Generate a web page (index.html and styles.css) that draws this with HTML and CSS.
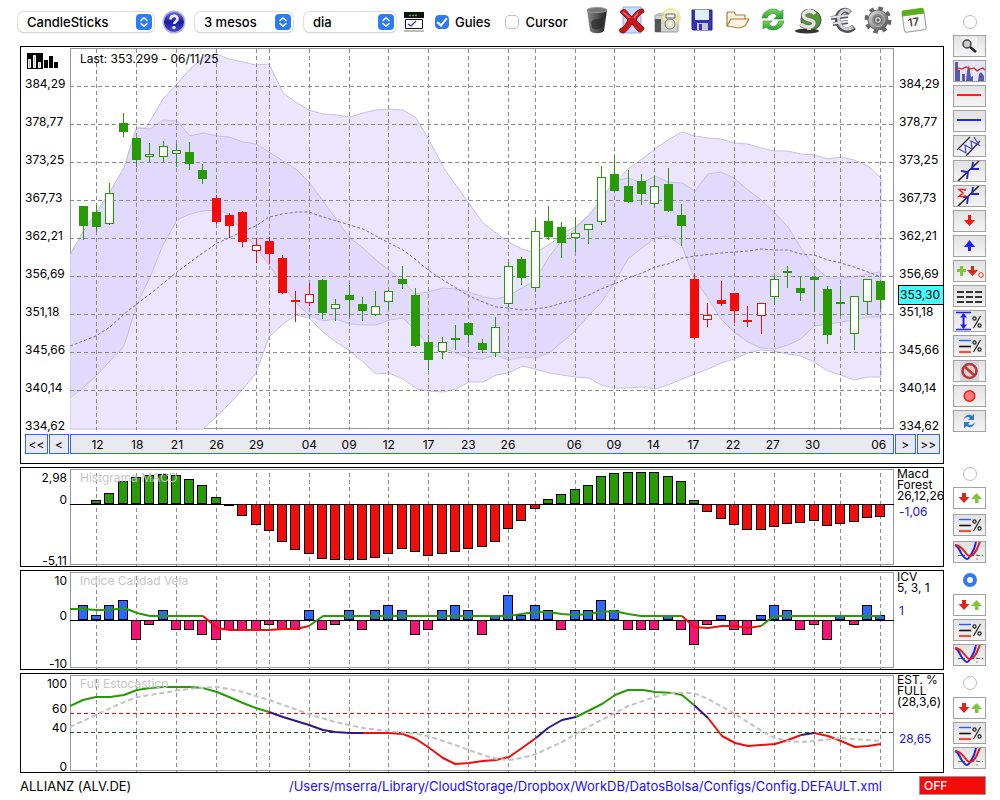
FILE: index.html
```html
<!DOCTYPE html>
<html lang="ca">
<head>
<meta charset="utf-8">
<meta name="viewport" content="width=device-width, initial-scale=1">
<title>ALLIANZ (ALV.DE)</title>
<link rel="stylesheet" href="styles.css">
</head>
<body>
<svg class="defs" aria-hidden="true">
<defs>
<linearGradient id="gHelp" x1="0" y1="0" x2="0" y2="1"><stop offset="0" stop-color="#6a6ae0"/><stop offset=".5" stop-color="#1a1a9c"/><stop offset="1" stop-color="#4a4ad0"/></linearGradient>
<linearGradient id="gTrash"><stop offset="0" stop-color="#8a8a8a"/><stop offset=".5" stop-color="#555"/><stop offset="1" stop-color="#222"/></linearGradient>
<linearGradient id="gSteel" x1="0" y1="0" x2="1" y2="1"><stop offset="0" stop-color="#eee"/><stop offset=".5" stop-color="#999"/><stop offset="1" stop-color="#444"/></linearGradient>
<linearGradient id="gGreen" x1="0" y1="0" x2="0" y2="1"><stop offset="0" stop-color="#7ed957"/><stop offset="1" stop-color="#1f9a30"/></linearGradient>
<symbol id="stepper" viewBox="0 0 16 16"><rect width="16" height="16" rx="4" fill="#2f7bf6"/><path d="M5 6.5 8 3.7 11 6.5M5 9.5 8 12.3 11 9.5" fill="none" stroke="#fff" stroke-width="1.5" stroke-linecap="round" stroke-linejoin="round"/></symbol>
<symbol id="percent" viewBox="0 0 10 16"><path d="M8.500 2 1.500 14" stroke="#222" stroke-width="1.200"/><circle cx="2.500" cy="4.500" r="1.600" fill="none" stroke="#222" stroke-width="1.200"/><circle cx="7.500" cy="11.500" r="1.600" fill="none" stroke="#222" stroke-width="1.200"/></symbol>
<symbol id="levels" viewBox="0 0 31 20"><path d="M5 4.500h12" stroke="#2a5cf5" stroke-width="1.400"/><path d="M5 10.500h12" stroke="#111" stroke-width="1.600"/><path d="M5 16h12" stroke="#f5503c" stroke-width="2.200"/><use href="#percent" x="18" y="2" width="10" height="16"/></symbol>
<symbol id="arrows" viewBox="0 0 31 20"><path d="M8 5h4v4h3.500L10 15 4.500 9H8z" fill="#e3221c"/><path d="M21 15h3.500v-4H28l-5.500-6L17 11h4z" fill="#7cc63e"/></symbol>
<symbol id="cross" viewBox="0 0 31 20"><path d="M4 13.500h25" stroke="#3c8a3c" stroke-dasharray="4 2 1 2"/><path d="M23 12v8" stroke="#889" stroke-dasharray="2 2"/><path d="M1 3c3 1 4 4 6 8 2 3 4 6 6 6s4-4 6-8c2-3 2-6 3-9" fill="none" stroke="#2222ee" stroke-width="2"/><path d="M1 3c4 0 7 3 10 7 2 3 3 4 5 4 3 0 5-3 7-7 1-3 2-5 3-7" fill="none" stroke="#e3221c" stroke-width="2"/></symbol>
</defs>
</svg>

<div class="page">
<header class="toolbar">
<div class="drop drop-type"><select aria-label="Tipus"><option>CandleSticks</option><option>Barres</option></select><svg><use href="#stepper"/></svg></div>
<button class="tool help" aria-label="Ajuda"><svg viewBox="0 0 24 24"><circle cx="12" cy="12" r="11.500" fill="#b4b4d8"/><circle cx="12" cy="12" r="10" fill="url(#gHelp)"/><path d="M8.500 9.500c0-5 7.500-4.500 7-.5-.3 2.400-3.200 2.500-3.400 5" fill="none" stroke="#eef" stroke-width="2.600"/><circle cx="12" cy="17.500" r="1.700" fill="#eef"/></svg></button>
<div class="drop drop-range"><select aria-label="Rang"><option>3 mesos</option><option>6 mesos</option></select><svg><use href="#stepper"/></svg></div>
<div class="drop drop-unit"><select aria-label="Periode"><option>dia</option><option>setmana</option></select><svg><use href="#stepper"/></svg></div>
<button class="tool plot-btn" aria-label="Plot"><svg viewBox="0 0 20 20"><path d="M0 0h20v6H0z" fill="#111"/><path d="M5 3.500h9" stroke="#2ec92e" stroke-width="1.500" stroke-dasharray="2 1"/><path d="M1.500 7.500h17v9h-17z" fill="#fff" stroke="#111"/><path d="M4 12l3 2 5-5" fill="none" stroke="#22e" stroke-width="1.200"/><path d="M0 19h20" stroke="#bbb" stroke-width="2"/></svg></button>
<label class="check"><input type="checkbox" checked><span>Guies</span></label>
<label class="check"><input type="checkbox"><span>Cursor</span></label>
<div class="icons">
<button class="tool" aria-label="Esborrar"><svg viewBox="0 0 28 28"><path d="M4 4l3 21c3 3 11 3 14 0l3-21z" fill="url(#gTrash)"/><ellipse cx="14" cy="4" rx="10" ry="2.500" fill="#777" stroke="#999"/><path d="M8 16c3-5 8-1 12-5l-1 10c-3 3-8 3-10 1z" fill="#222" opacity=".6"/></svg></button>
<button class="tool" aria-label="Treure"><svg viewBox="0 0 28 28"><path d="M5 1h18v26H5z" fill="#c6dcfc" stroke="#8ab0ee"/><path d="M2 6c3-4 6-3 8 1l4 4c2-4 6-8 11-8l1 3c-4 2-6 5-8 8l8 8c0 3-4 5-6 3l-6-7c-3 4-5 8-9 9-3 0-4-2-3-4 3-1 6-5 8-9z" fill="#c81818" stroke="#8a0c0c"/><path d="M5 6l7 6M20 7l-4 5" stroke="#f27070" stroke-width="1.500"/></svg></button>
<button class="tool" aria-label="Captura"><svg viewBox="0 0 28 28"><rect x="2" y="9" width="23" height="17" rx="1" fill="#d2d2ce" stroke="#999"/><path d="M2 13h6v13H2z" fill="#555"/><path d="M3 9l2-2h6v2z" fill="#bbb"/><circle cx="18" cy="12" r="9" fill="#f5f3b8" opacity=".65" stroke="#e3df80" stroke-width="2"/><circle cx="17" cy="18" r="5" fill="#ddd" stroke="#777"/><circle cx="17" cy="18" r="2" fill="#f5f3b8"/><path d="M13 8h9v4h-9z" fill="#f2f2f2" stroke="#666"/></svg></button>
<button class="tool" aria-label="Desar"><svg viewBox="0 0 28 28"><path d="M4 4h20v20H5l-1-1z" fill="#3636b4" stroke="#22228c"/><path d="M7 4h14v10H7z" fill="#dff0fb"/><path d="M9 17h11v7H9z" fill="#c9c9d4"/><path d="M11 18h3v6h-3z" fill="#3636b4"/></svg></button>
<button class="tool" aria-label="Obrir"><svg viewBox="0 0 28 28"><path d="M3 20V7l1-1h6l2 3h9v4M3 20l4-7h18l-4 7-6 2z" fill="#fff3df" stroke="#b37a35" stroke-width="1.200" stroke-linejoin="round"/></svg></button>
<button class="tool" aria-label="Refrescar"><svg viewBox="0 0 28 28"><path d="M3 12C5 2 17 1 21 6l3-2v9h-9l3-3c-3-4-8-3-10 2z" fill="url(#gGreen)" stroke="#2a8c30" stroke-width=".6"/><path d="M25 15c-2 10-14 11-18 6l-3 2v-8h9l-3 3c3 4 8 3 10-3z" fill="url(#gGreen)" stroke="#2a8c30" stroke-width=".6"/></svg></button>
<button class="tool" aria-label="Dolar"><svg viewBox="0 0 28 28"><ellipse cx="13" cy="25" rx="12" ry="2.500" fill="#333"/><circle cx="17" cy="14" r="10" fill="#4f9a34" stroke="#444"/><path d="M21 8c-4-5-14-2-11 3 2 4 10 2 10 6 0 5-9 5-13 1" fill="none" stroke="#666" stroke-width="5"/><path d="M21 8c-4-5-14-2-11 3 2 4 10 2 10 6 0 5-9 5-13 1M15 3v3M15 21v3" fill="none" stroke="#e3e6dc" stroke-width="3.500"/></svg></button>
<button class="tool" aria-label="Euro"><svg viewBox="0 0 28 28"><g fill="none" stroke="#55505a"><path d="M21 7C15 1 7 7 9 16c2 8 10 11 16 5" stroke-width="5.500"/><path d="M2 12l17-2M4 18l15-2" stroke-width="4"/></g><path d="M21 6C15 1 8 7 10 16c2 7 9 9 14 5" fill="none" stroke="#cfccd4" stroke-width="3"/><path d="M2 11.500l17-2M4 17.500l15-2" stroke="#e3e0e8" stroke-width="2"/></svg></button>
<button class="tool" aria-label="Configurar"><svg viewBox="0 0 28 28"><circle cx="14" cy="14" r="11.500" fill="none" stroke="#666" stroke-width="4" stroke-dasharray="4.500 4.530"/><circle cx="14" cy="14" r="10" fill="url(#gSteel)" stroke="#666"/><circle cx="14" cy="14" r="6.500" fill="#8a8a8a" stroke="#bbb"/><circle cx="14" cy="14" r="3.500" fill="#ddd" stroke="#555"/><circle cx="14" cy="14" r="1.500" fill="#555"/></svg></button>
<button class="tool day" aria-label="Calendari"><svg viewBox="0 0 28 28"><g transform="rotate(-8 14 14)"><rect x="3" y="4" width="22" height="21" rx="2" fill="#fafafa" stroke="#999"/><path d="M3 9V5l1-2h20l1 2v4z" fill="#5cae1c"/></g></svg><span>17</span></button>
</div>
</header>

<aside class="side side-main">
<input type="radio" name="panel" aria-label="Grafic">
<button aria-label="Zoom"><svg viewBox="0 0 31 20"><path d="M8 1h15v18H8z" fill="#f2f2f2"/><circle cx="13" cy="8" r="4" fill="#ccc" stroke="#444" stroke-width="1.500"/><path d="M16 11l6 5" stroke="#222" stroke-width="2.500"/></svg></button>
<button aria-label="Volum"><svg viewBox="0 0 31 20"><path d="M0 0h31v20H0z" fill="#e4e4f6"/><path d="M1 20V1h3v8h2v11zM8 20v-7h3v7zM12 20l1-10 2-6 2 12 2-1v5zM24 20l1-7 2-2 3 4v5z" fill="#5858ac"/><path d="M19.500 0v20" stroke="#fff"/><path d="M1 8l4-1 3 1 4-2 4 2 4-1 3 3 3-2 3-1 2 2" fill="none" stroke="#d81c1c" stroke-width="1.200"/></svg></button>
<button aria-label="Linia vermella"><svg viewBox="0 0 31 20"><path d="M3 9h24" stroke="#e22" stroke-width="2"/></svg></button>
<button aria-label="Linia blava"><svg viewBox="0 0 31 20"><path d="M3 9h24" stroke="#22f" stroke-width="2"/></svg></button>
<button aria-label="Canal"><svg viewBox="0 0 31 20"><path d="M3 14L16 1M12 20L26 5" stroke="#222" stroke-width="1.200"/><path d="M5 13l7 4-1-8 7 4-1-8 8 4-5-8" fill="none" stroke="#44d" stroke-width="1.200"/></svg></button>
<button aria-label="Tendencia"><svg viewBox="0 0 31 20"><path d="M4 20L25 0" stroke="#222" stroke-width="1.600"/><path d="M7 10l7 1-1 7M25 8l-7 0 1-7" fill="none" stroke="#22d" stroke-width="1.800"/></svg></button>
<button aria-label="Tendencia suma"><svg viewBox="0 0 31 20"><path d="M4 20L25 0" stroke="#222" stroke-width="1.600"/><path d="M9 11h5l-1 7M25 8l-7 0 1-7" fill="none" stroke="#22d" stroke-width="1.800"/><path d="M11 5V3.500H5l4 3.500-4 3.500h6V9" fill="none" stroke="#e22" stroke-width="1.500"/></svg></button>
<button aria-label="Venda"><svg viewBox="0 0 31 20"><path d="M14 4h3v5h4l-5.500 6L10 9h4z" fill="#f51414"/></svg></button>
<button aria-label="Compra"><svg viewBox="0 0 31 20"><path d="M14 15h3v-4h4l-5.500-7L10 11h4z" fill="#2222f5"/></svg></button>
<button aria-label="Senyals"><svg viewBox="0 0 31 20"><path d="M6 5h3v3h3v3H9v4H6v-4H3V8h3z" fill="#7cc63e"/><path d="M17 5h3v4h4l-5.500 6L13 9h4z" fill="#e3221c"/><circle cx="27" cy="14" r="2.300" fill="#fff" stroke="#e22"/></svg></button>
<button aria-label="Nivells"><svg viewBox="0 0 31 20"><path d="M3 6h25M3 11h25M3 16h25" stroke="#333" stroke-width="2" stroke-dasharray="7 2"/></svg></button>
<button aria-label="Distancia"><svg viewBox="0 0 31 20"><path d="M2 1.500h15M2 18.500h15" stroke="#22e" stroke-width="1.300"/><path d="M9.500 3v14" stroke="#22e" stroke-width="2"/><path d="M6 6.500L9.500 2 13 6.500zM6 13.500L9.500 18l3.500-4.500z" fill="#22e"/><use href="#percent" x="18" y="3" width="10" height="16"/></svg></button>
<button aria-label="Percentatges"><svg viewBox="0 0 31 20"><use href="#levels"/></svg></button>
<button aria-label="Prohibir"><svg viewBox="0 0 31 20"><path d="M6 0h19v20H6z" fill="#d5d5e0"/><circle cx="15.500" cy="10" r="7" fill="#e8caca" stroke="#b43c3c" stroke-width="2.600"/><path d="M10.500 5.500l10 9" stroke="#b43c3c" stroke-width="2.600"/></svg></button>
<button aria-label="Gravar"><svg viewBox="0 0 31 20"><circle cx="15.500" cy="10" r="5.300" fill="#ff7b7b" stroke="#e02020" stroke-width="1.500"/></svg></button>
<button aria-label="Actualitzar"><svg viewBox="0 0 31 20"><path d="M10 8c1-5 7-5 8-3l2-2v6h-6l2-2c-2-2-4-1-6 1zM21 11c-1 6-7 6-8 4l-3 2v-6h6l-2 2c2 2 5 1 7-2z" fill="#2f78d0"/></svg></button>
</aside>

<section class="panel panel-price">
<div class="scale scale-left">
<svg class="logo" viewBox="0 0 32 16"><path d="M0 0h16v16H0z"/><path d="M1.500 6.500h2v8h-2zM6.500 2.500h2v12h-2zM11.500 9.500h2v5h-2z" fill="#bbb" stroke="#fff"/><path d="M17 7h4v8h-4zM22 3h4v12h-4zM27 9h4v6h-4z"/></svg>
<div class="prices"></div>
</div>
<div class="plot"><span class="caption">Last: 353.299 - 06/11/25</span><svg id="price" viewBox="70 47 824 387" preserveAspectRatio="none"></svg></div>
<div class="scale scale-right"><div class="prices"></div><output class="last">353,30</output></div>
<nav class="nav nav-left"><button>&lt;&lt;</button><button>&lt;</button></nav>
<div class="dates" id="dates"></div>
<nav class="nav"><button>&gt;</button><button>&gt;&gt;</button></nav>
</section>

<section class="panel panel-macd">
<div class="scale ticks"><span>2,98</span><span>0</span><span>-5,11</span></div>
<div class="plot"><span class="caption dim">Histgrama MACD</span><svg id="macd" viewBox="70 468 824 98" preserveAspectRatio="none"></svg></div>
<div class="info">Macd<br>Forest<br>26,12,26<output>-1,06</output></div>
</section>
<aside class="side side-macd">
<input type="radio" name="panel" aria-label="MACD">
<button class="plain" aria-label="Senyals MACD"><svg><use href="#arrows"/></svg></button>
<button aria-label="Percentatges MACD"><svg><use href="#levels"/></svg></button>
<button aria-label="Creuaments MACD"><svg><use href="#cross"/></svg></button>
</aside>

<section class="panel panel-icv">
<div class="scale ticks"><span>10</span><span>0</span><span>-10</span></div>
<div class="plot"><span class="caption dim">Indice Calidad Vela</span><svg id="icv" viewBox="70 571 824 98" preserveAspectRatio="none"></svg></div>
<div class="info">ICV<br>5, 3, 1<output>1</output></div>
</section>
<aside class="side">
<input type="radio" name="panel" aria-label="ICV" checked>
<button class="plain" aria-label="Senyals ICV"><svg><use href="#arrows"/></svg></button>
<button aria-label="Percentatges ICV"><svg><use href="#levels"/></svg></button>
<button aria-label="Creuaments ICV"><svg><use href="#cross"/></svg></button>
</aside>

<section class="panel panel-est">
<div class="scale ticks"><span>100</span><span>60</span><span>40</span><span>0</span></div>
<div class="plot"><span class="caption dim">Full Estocastico</span><svg id="est" viewBox="70 674 824 98" preserveAspectRatio="none"></svg></div>
<div class="info">EST. %<br>FULL<br>(28,3,6)<output>28,65</output></div>
</section>
<aside class="side">
<input type="radio" name="panel" aria-label="Estocastic">
<button class="plain" aria-label="Senyals EST"><svg><use href="#arrows"/></svg></button>
<button aria-label="Percentatges EST"><svg><use href="#levels"/></svg></button>
<button aria-label="Creuaments EST"><svg><use href="#cross"/></svg></button>
</aside>

<footer class="status">
<span>ALLIANZ (ALV.DE)</span>
<a href="#">/Users/mserra/Library/CloudStorage/Dropbox/WorkDB/DatosBolsa/Configs/Config.DEFAULT.xml</a>
<button>OFF</button>
</footer>
</div>
<script src="charts.js"></script>
</body>
</html>
```
FILE: styles.css
```css
* {
box-sizing: border-box;
}
body {
margin: 0;
background: #fff;
color: #000;
font-family: Inter, "Liberation Sans", sans-serif;
font-size: 12px;
font-feature-settings: "calt" 0;
}
button, select, input {
font: inherit;
color: inherit;
margin: 0;
}
button {
padding: 0;
cursor: pointer;
}
svg {
display: block;
}
.defs {
position: absolute;
width: 0;
height: 0;
}
.page {
display: grid;
grid-template-columns: minmax(0, 1fr) 33px;
grid-template-rows: 43px;
column-gap: 9px;
row-gap: 3px;
padding: 0 14px 0 20px;
}

/* toolbar */
.toolbar {
display: flex;
align-items: center;
height: 43px;
margin-left: -2px;
font-size: 13px;
font-weight: 500;
}
.drop {
position: relative;
}
.drop select {
appearance: none;
display: block;
width: 100%;
height: 20px;
padding: 0 22px 0 9px;
border: 0;
border-radius: 6px;
background: #fff;
box-shadow: 0 0 1px 1px #ddd, 0 1px 1px #aaa;
line-height: 18px;
}
.drop svg {
position: absolute;
top: 2px;
right: 2px;
width: 16px;
height: 16px;
pointer-events: none;
}
.drop-type {
width: 136px;
}
.drop-range {
width: 98px;
}
.drop-unit {
width: 92px;
margin-left: 11px;
}
.tool {
border: 0;
background: none;
width: 28px;
height: 28px;
}
.tool svg {
width: 100%;
height: 100%;
}
.help {
width: 24px;
height: 24px;
margin: 0 9px 0 8px;
}
.plot-btn {
width: 20px;
height: 20px;
margin: 0 11px 0 8px;
}
.check {
display: flex;
align-items: center;
gap: 6px;
margin-right: 15px;
}
.check input {
appearance: none;
width: 14px;
height: 14px;
border: 1px solid #c4c4c4;
border-radius: 4px;
background: #fff;
}
.check input:checked {
border-color: #2f7bf6;
background: #2f7bf6;
display: grid;
place-items: center;
}
.check input:checked::before {
content: "";
width: 4px;
height: 8px;
margin-bottom: 2px;
border: solid #fff;
border-width: 0 2px 2px 0;
transform: rotate(40deg);
}
.icons {
display: flex;
flex: 1;
justify-content: space-between;
max-width: 345px;
padding-bottom: 3px;
}
.day {
position: relative;
}
.day span {
position: absolute;
left: 8px;
top: 9px;
font-size: 11px;
font-weight: 600;
line-height: 14px;
color: #444;
transform: rotate(-8deg);
}

/* side buttons */
.side {
display: flex;
flex-direction: column;
gap: 3px;
padding-top: 3px;
}
.side-main {
grid-column: 2;
grid-row: 1 / span 2;
padding-top: 15px;
}
.side-macd {
gap: 5px;
padding-top: 0;
}
.side input {
appearance: none;
width: 14px;
height: 14px;
margin: 0 auto 4px;
border: 1px solid #bbb;
border-radius: 50%;
background: #fff;
}
.side-main input {
margin-bottom: 3px;
}
.side-macd input {
margin-bottom: 1px;
}
.side input:checked {
border: 4px solid #2f7bf6;
}
.side button {
height: 22px;
border: 1px solid #a2a2a2;
background: linear-gradient(#e2e2e2, #f4f4f4);
}
.side button.plain {
background: #fff;
}
.side button svg {
width: 31px;
height: 20px;
}

/* panels */
.panel {
grid-column: 1;
display: grid;
grid-template-columns: 49px minmax(0, 1fr) 49px;
border: 1px solid #000;
height: 100px;
}
.panel-price {
height: auto;
grid-template-rows: 387px 20px;
padding-bottom: 9px;
}
.plot {
position: relative;
}
.plot svg {
width: 100%;
height: 98px;
}
.panel-price .plot svg {
height: 387px;
}
.caption {
position: absolute;
left: 10px;
top: 2px;
line-height: 16px;
}
.panel-price .caption {
top: 4px;
}
.dim {
color: #c6c6c6;
}
.scale {
position: relative;
}
.scale-left {
padding: 6px 0 0 4px;
}
.scale-right {
padding: 29px 0 0 5px;
}
.logo {
width: 32px;
height: 16px;
margin: 0 0 7px 2px;
}
.prices {
display: flex;
flex-direction: column;
gap: 22px;
line-height: 16px;
}
.last {
position: absolute;
top: 238px;
left: 4px;
right: -1px;
height: 20px;
padding-left: 1px;
border: 1px solid #000;
background: #4ff;
line-height: 18px;
}
.nav {
display: flex;
gap: 1px;
padding: 0 3px 0 1px;
}
.nav-left {
padding: 0 1px 0 4px;
}
.nav button, .dates {
border: 1px solid #2f67f0;
background: #e9eaf0;
}
.nav button {
flex: 20 1 0;
}
.nav-left button:first-child, .nav:not(.nav-left) button:last-child {
flex-grow: 23;
}
.dates {
display: grid;
grid-template-columns: repeat(62, minmax(0, 1fr));
padding-right: 1px;
line-height: 20px;
text-align: center;
}
.ticks {
display: grid;
padding: 4px 3px 0 0;
line-height: 12px;
text-align: right;
align-content: start;
}
.panel-macd .ticks {
grid-template-rows: 22px 61px;
}
.panel-icv .ticks {
grid-template-rows: 35px 48px;
}
.panel-est .ticks {
grid-template-rows: 25px 19px 39px;
}
.info {
padding-left: 3px;
line-height: 11px;
white-space: nowrap;
}
.info output {
display: block;
margin: 5px 0 0 2px;
color: #1a0dff;
}
.panel-icv output {
margin-top: 12px;
}
.panel-est output {
margin-top: 26px;
}

/* chart strokes */
.frame {
fill: none;
stroke: #979797;
}
.grid {
stroke: #8c8c8c;
stroke-dasharray: 4 3;
}
.frame, .grid, .zero, .candle, .bar {
shape-rendering: crispEdges;
}
.band {
fill: #ebe6fe;
stroke: #c5c1e4;
}
.band-in {
fill: #e2dafd;
}
.mid {
fill: none;
stroke: #7c7394;
stroke-dasharray: 3 2;
}
.zero {
stroke: #000;
}
.green {
fill: #279a05;
stroke: #279a05;
}
.red {
fill: #f20d0a;
stroke: #f20d0a;
}
.hollow {
fill: #fff;
}
.bar {
stroke: #000;
}
.blue {
fill: #2b68fb;
}
.pink {
fill: #f51378;
}
.line {
fill: none;
stroke-width: 2;
stroke-linejoin: round;
}
.navy {
stroke: #2f1680;
}
.slow {
stroke: #c2c2c2;
stroke-dasharray: 5 3;
}
.high {
stroke: #f00;
stroke-dasharray: 4 3;
}
.low {
stroke: #0b5e0b;
stroke-dasharray: 4 3;
}

.status {
grid-column: 1 / -1;
display: flex;
align-items: center;
height: 19px;
font-size: 13px;
}
.status a {
margin: 0 37px 0 auto;
color: #1a0dff;
text-decoration: none;
}
.status button {
width: 67px;
height: 19px;
padding-left: 4px;
border: 1px solid #999;
background: #f20d0a;
color: #fff;
font-size: 12px;
font-weight: 500;
text-align: left;
}
```
FILE: charts.js
```js
const NS = 'http://www.w3.org/2000/svg'
const marks = [1,4,7,10,13,14,17,20,23,26,29,32,34,37,40,43,46,49,52,55,57,60]
const days = {1:'12',4:'18',7:'21',10:'26',13:'29',17:'04',20:'09',23:'12',26:'17',29:'23',32:'26',37:'06',40:'09',43:'14',46:'17',49:'22',52:'27',55:'30',60:'06'}
const prices = ['384,29','378,77','373,25','367,73','362,21','356,69','351,18','345,66','340,14','334,62']

// high, body top, body bottom, low, kind (upper case = hollow)
const candles = `206 206 226 240 g;205 212 227 232 g;183 193 224 225 G;113 123 132 137 g;137 138 160 167 g
143 154 157 162 G;141 146 157 162 G;144 150 154 167 G;142 152 164 170 g;164 170 179 184 g
195 198 222 224 r;213 215 226 238 r;211 212 242 247 r;238 245 251 263 R;237 241 254 264 r
255 258 293 294 r;291 300 302 322 r;283 294 303 306 R;279 280 313 319 g;299 304 309 321 G
285 295 300 317 g;297 304 311 321 g;291 306 315 316 G;290 291 302 310 G;266 279 284 289 g
288 295 346 347 g;335 342 360 370 g;337 342 352 359 G;325 338 340 350 g;322 323 335 343 g
339 343 350 353 g;317 327 353 357 G;262 266 304 307 G;257 259 278 285 g;219 231 288 292 G
206 221 237 240 g;222 227 243 258 g;217 233 238 252 G;224 224 230 244 G;166 177 222 225 G
156 174 191 192 g;170 186 202 203 g;174 181 194 205 g;176 186 204 208 G;168 184 211 212 g
204 215 226 246 g;274 279 338 339 r;303 315 320 327 R;281 300 304 306 r;293 293 311 323 r
306 320 321 327 r;303 303 316 334 R;275 279 297 305 G;266 271 273 288 g;276 288 293 301 g
277 277 280 312 g;286 289 335 344 g;286 302 303 316 g;296 296 334 350 G;279 279 302 315 G
281 281 300 309 g`.split(/[;\n]/).map(s => s.split(' '))

const outerTop = '70,255 83,232 96,213 110,192 124,168 135,132 137,128 146,128 163,99 177,84 190,69 203,58 217,54 229,59 243,62 256,65 269,64 283,93 297,103 309,110 323,114 337,115 350,117 363,113 376,110 389,109 403,110 416,118 429,140 445,170 483,223 508,242 522,249 533,252 540,250 553,242 563,233 575,227 589,215 601,200 614,181 618,180 628,169 642,159 655,149 668,140 682,132 695,136 708,138 721,139 734,143 748,144 761,148 774,151 788,151 801,154 814,155 828,159 841,157 854,160 868,166 881,178'
const outerLow = '70,429 203,429 217,416 230,403 243,389 256,373 269,337 283,324 296,315 309,318 323,332 336,342 350,351 363,362 376,374 389,373 403,379 417,389 429,391 443,392 456,389 469,382 483,382 496,375 508,373 523,366 535,369 549,373 562,375 575,377 589,378 601,385 614,388 628,388 642,387 655,389 668,385 682,379 695,374 708,369 721,363 734,359 748,353 761,350 774,351 788,354 801,356 814,362 828,371 841,375 854,380 868,377 881,377'
const innerTop = '70,255 83,232 96,213 110,192 124,168 135,132 137,128 150,129 163,120 177,121 190,136 203,133 217,136 229,137 243,142 256,144 269,152 283,161 297,170 309,182 323,201 336,219 350,238 363,248 376,260 389,270 403,281 415,294 428,292 443,288 456,289 469,292 483,297 496,299 508,296 522,288 533,282 540,272 549,257 562,240 575,229 589,215 601,200 614,181 618,180 628,178 642,183 655,176 668,182 682,183 695,191 708,174 721,172 734,178 748,190 761,200 774,212 788,227 801,248 814,266 828,278 841,278 854,277 868,274 881,272'
const innerLow = '70,398 83,388 96,376 110,361 124,346 137,304 150,277 163,245 177,220 190,214 203,211 217,210 229,214 243,233 256,247 269,265 283,285 296,303 309,315 323,321 336,319 350,324 363,325 376,325 389,320 403,318 415,330 428,344 443,348 456,353 469,358 483,359 496,355 508,360 523,357 535,358 549,353 562,342 575,331 589,315 601,303 614,283 628,259 642,248 655,238 668,236 682,246 695,280 708,298 721,319 734,332 748,342 761,348 774,349 788,345 801,339 814,326 828,324 841,322 854,320 868,317 881,317'
const middle = '70,346 96,336 110,327 124,314 150,294 177,272 200,255 217,243 229,238 243,231 256,226 269,217 283,214 297,212 309,212 323,217 350,225 363,229 376,236 389,243 403,250 415,259 428,270 443,280 456,288 469,296 483,302 496,307 508,308 523,310 535,309 549,307 562,303 575,300 589,295 601,289 614,284 628,278 642,273 655,267 668,264 682,258 695,256 721,253 748,251 761,249 774,250 788,250 801,254 814,255 828,260 841,263 854,267 868,272 881,277'

const macd = [504,500,493,481,477,475,474,475,479,485,497,505,515,524,530,541,549,553,558,559,559,559,557,553,548,551,555,553,551,548,546,541,528,520,508,499,494,489,485,476,473,472,472,472,476,481,500,511,518,524,529,529,526,523,522,520,525,523,521,517,516]
const icv = [3,1,3,4,-4,-1,2,-2,-2,-3,-4,-2,-2,-2,-1,-2,-2,2,-2,-1,2,-2,2,3,2,-3,-2,2,3,2,-3,1,5,1,3,2,-2,2,2,4,2,-2,-2,-2,1,-2,-5,-1,1,-2,-3,1,3,2,-2,-1,-4,1,-1,3,1]

const icvLine = [
['green','70,609 83,609 96,610 110,610 124,608 137,613 150,616 203,616'],
['red','203,616 217,628 230,630 269,630 283,629 296,629 309,626'],
['green','309,626 323,616 508,616 522,614 535,612 548,612 562,614 575,615 588,614 601,612 614,611 628,614 641,616 682,616'],
['red','682,616 694,627 708,628 722,626 735,626 748,628 761,626'],
['green','761,626 774,616 881,616']]
const estLine = [
['green','70,706 83,700 96,697 110,697 124,695 137,690 150,688 163,687 190,687 203,688 217,692 229,697 243,703 256,708 269,712'],
['navy','269,712 283,717 296,721 309,725 323,730 335,732 350,733 363,733'],
['red','363,733 388,733 403,734 416,739 428,747 443,758 455,764 469,763 483,761 496,760 509,757 522,748 536,738'],
['navy','536,738 548,728 562,720 576,717'],
['green','576,717 588,711 602,704 615,695 628,690 643,690 655,692 673,693 682,695 694,705'],
['navy','694,705 708,718'],
['red','708,718 722,736 735,743 748,746 775,744 788,740 801,735'],
['navy','801,735 814,733'],
['red','814,733 828,736 841,741 855,747 868,746 881,744']]
const estSlow = '70,727 83,721 100,713 117,705 137,697 163,693 180,690 197,688 217,687 229,689 243,692 269,700 309,714 335,722 363,728 388,731 417,734 428,736 455,745 483,755 497,759 509,760 522,758 536,754 562,742 588,727 615,713 628,706 655,697 673,693 694,693 708,699 735,714 762,731 775,738 788,741 801,742 814,741 841,738 881,741'

function add(svg, tag, cls, attrs) {
const el = document.createElementNS(NS, tag)
el.setAttribute('class', cls)
for (const k in attrs) el.setAttribute(k, attrs[k])
svg.appendChild(el)
}
function line(svg, cls, x1, y1, x2, y2) {
add(svg, 'line', cls, {x1, y1, x2, y2})
}
function barX(i) {
return Math.floor(83.3 + 13.29 * i) + 0.5
}
function frame(svg, top, bottom) {
add(svg, 'rect', 'frame', {x: 70.5, y: top, width: 823, height: bottom - top})
}
function columns(svg, top, bottom) {
for (const i of marks) line(svg, 'grid', barX(i), top, barX(i), bottom)
}
function bar(svg, cls, i, zero, y) {
add(svg, 'rect', 'bar ' + cls, {x: barX(i) - 5, y: Math.min(zero, y), width: 9, height: Math.abs(y - zero)})
}
function band(svg, cls, top, low) {
add(svg, 'polygon', 'band ' + cls, {points: top + ' ' + low.split(' ').reverse().join(' ')})
}

const p = document.getElementById('price')
frame(p, 48.5, 428.5)
band(p, '', outerTop, outerLow)
band(p, 'band-in', innerTop, innerLow)
for (let y = 86.5; y < 400; y += 38) line(p, 'grid', 70, y, 894, y)
columns(p, 49, 430)
add(p, 'polyline', 'mid', {points: middle})
candles.forEach(([hi, top, bot, lo, kind], i) => {
const x = barX(i)
const cls = 'candle ' + (kind.toLowerCase() == 'g' ? 'green' : 'red')
line(p, cls, x, hi, x, lo)
add(p, 'rect', cls + (kind < 'a' ? ' hollow' : ''), {x: x - 4, y: +top + 0.5, width: 8, height: Math.max(bot - top - 1, 0.5)})
})

const m = document.getElementById('macd')
frame(m, 469.5, 564.5)
columns(m, 473, 566)
macd.forEach((y, i) => { if (i) bar(m, y < 504 ? 'green bar' : 'red bar', i, y < 504 ? 503.5 : 504.5, y + 0.5) })
line(m, 'zero', 70, 504.5, 894, 504.5)

const c = document.getElementById('icv')
frame(c, 572.5, 667.5)
columns(c, 576, 669)
icv.forEach((v, i) => bar(c, v > 0 ? 'blue' : 'pink', i, v > 0 ? 619.5 : 620.5, v > 0 ? 620.5 - 5 * v : 619.5 - 5 * v))
line(c, 'zero', 70, 620.5, 894, 620.5)
for (const [cls, points] of icvLine) add(c, 'polyline', cls + ' line', {points})

const e = document.getElementById('est')
frame(e, 675.5, 770.5)
columns(e, 679, 772)
line(e, 'high', 70, 713.5, 894, 713.5)
line(e, 'low', 70, 732.5, 894, 732.5)
for (const [cls, points] of estLine) add(e, 'polyline', cls + ' line', {points})
add(e, 'polyline', 'slow line', {points: estSlow})

for (const box of document.querySelectorAll('.prices')) {
for (const t of prices) {
const s = document.createElement('span')
s.textContent = t
box.appendChild(s)
}
}
// each label is centred on the boundary between two columns
for (const i in days) {
const s = document.createElement('span')
s.textContent = days[i]
s.style.gridColumn = `${+i + 1} / span 2`
document.getElementById('dates').appendChild(s)
}
```
